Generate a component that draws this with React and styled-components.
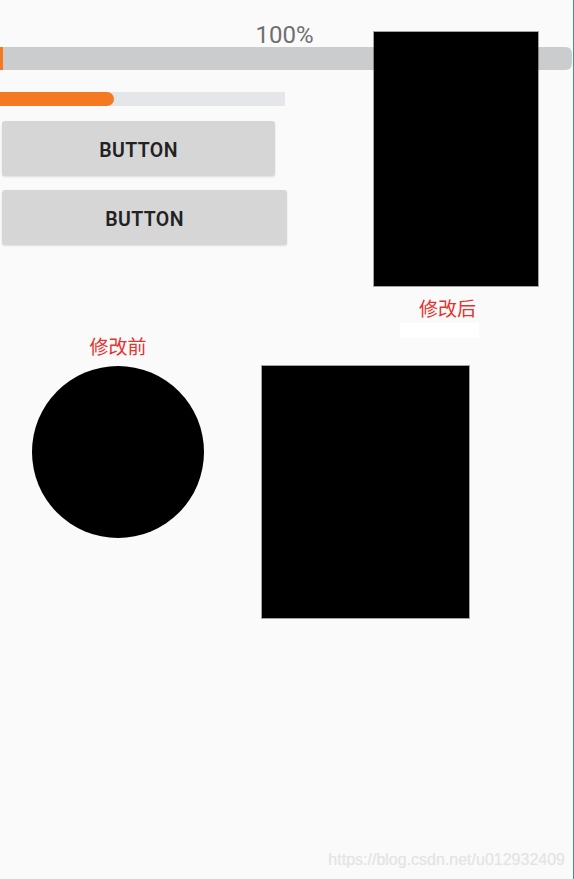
import React from 'react';
import styled, { createGlobalStyle } from 'styled-components';

const BG = '#fafafa';
const ORANGE = '#f47920';
const RED = '#e5322d';
const CJK = `Roboto, 'Noto Sans CJK SC', sans-serif`;

const GlobalStyle = createGlobalStyle`
  html, body {
    margin: 0;
    padding: 0;
    background: ${BG};
  }
`;

class App extends React.Component {
  render() {
    return (
      <Page>
        <GlobalStyle />
        <TopSection>
          <PercentLabel>100%</PercentLabel>
          <BigBar>
            <BigBarFill />
          </BigBar>
          <SmallBar>
            <SmallBarFill style={{ width: '40%' }} />
          </SmallBar>
          <ButtonStack>
            <Button width={273}>BUTTON</Button>
            <Button width={285}>BUTTON</Button>
          </ButtonStack>
        </TopSection>

        <ShapesRow>
          <Caption>修改前</Caption>
          <span />
          <Circle />
          <Rect width={207} height={252} />
        </ShapesRow>

        <FloatingGroup>
          <Rect width={164} height={254} />
          <AfterCaption>修改后</AfterCaption>
          <WhiteStrip />
        </FloatingGroup>

        <Watermark>https://blog.csdn.net/u012932409</Watermark>
      </Page>
    );
  }
}

const Page = styled.div`
  position: relative;
  width: 573px;
  height: 879px;
  background: ${BG};
  border-right: 1px solid #3b8ec2;
  overflow: hidden;
  font-family: Roboto, sans-serif;
`;

const TopSection = styled.div`
  display: flex;
  flex-direction: column;
  align-items: flex-start;
  padding-top: 23px;
`;

const PercentLabel = styled.div`
  align-self: stretch;
  box-sizing: border-box;
  padding-right: 4px;
  margin-bottom: -1px;
  text-align: center;
  font-size: 24px;
  line-height: 25px;
  color: #6f6f6f;
`;

const BigBar = styled.div`
  width: 572px;
  height: 23px;
  background: #cbcccd;
  border-radius: 0 6px 6px 0;
  display: flex;
`;

const BigBarFill = styled.div`
  width: 3px;
  height: 100%;
  background: ${ORANGE};
`;

const SmallBar = styled.div`
  margin-top: 22px;
  width: 285px;
  height: 14px;
  background: #e4e6e9;
  display: flex;
`;

const SmallBarFill = styled.div`
  height: 100%;
  background: ${ORANGE};
  border-radius: 0 7px 7px 0;
`;

const ButtonStack = styled.div`
  margin-top: 15px;
  padding-left: 2px;
  display: flex;
  flex-direction: column;
  gap: 14px;
`;

const Button = styled.div`
  box-sizing: border-box;
  width: ${(p) => p.width}px;
  height: 55px;
  padding-top: 3px;
  background: #d6d6d6;
  border-radius: 3px;
  box-shadow: 0 1px 2px rgba(0, 0, 0, 0.12);
  display: flex;
  align-items: center;
  justify-content: center;
  font-size: 19.5px;
  font-weight: 600;
  letter-spacing: 0.4px;
  color: #222222;
`;

const ShapesRow = styled.div`
  margin-top: 90px;
  padding-left: 32px;
  display: grid;
  grid-template-columns: 172px 207px;
  column-gap: 58px;
  row-gap: 6px;
  align-items: start;
`;

const Caption = styled.div`
  text-align: center;
  font-family: ${CJK};
  font-size: 19px;
  line-height: 25px;
  color: ${RED};
`;

const Circle = styled.div`
  width: 172px;
  height: 172px;
  border-radius: 50%;
  background: #000;
`;

const Rect = styled.div`
  width: ${(p) => p.width}px;
  height: ${(p) => p.height}px;
  background: #000;
  box-shadow: 0 0 0 1px rgba(0, 0, 0, 0.35);
`;

const FloatingGroup = styled.div`
  position: absolute;
  left: 374px;
  top: 32px;
  display: flex;
  flex-direction: column;
  align-items: flex-start;
`;

const AfterCaption = styled.div`
  margin-top: 11px;
  margin-left: 45px;
  font-family: ${CJK};
  font-size: 19px;
  line-height: 25px;
  color: ${RED};
`;

const WhiteStrip = styled.div`
  margin-top: 1px;
  margin-left: 26px;
  width: 79px;
  height: 15px;
  background: #ffffff;
`;

const Watermark = styled.div`
  position: absolute;
  right: 8px;
  top: 850px;
  font-family: 'Liberation Sans', Arial, sans-serif;
  font-size: 16px;
  line-height: 20px;
  color: #e4e4e4;
  text-shadow: 0 0 1px rgba(0, 0, 0, 0.06);
`;

export default App;
